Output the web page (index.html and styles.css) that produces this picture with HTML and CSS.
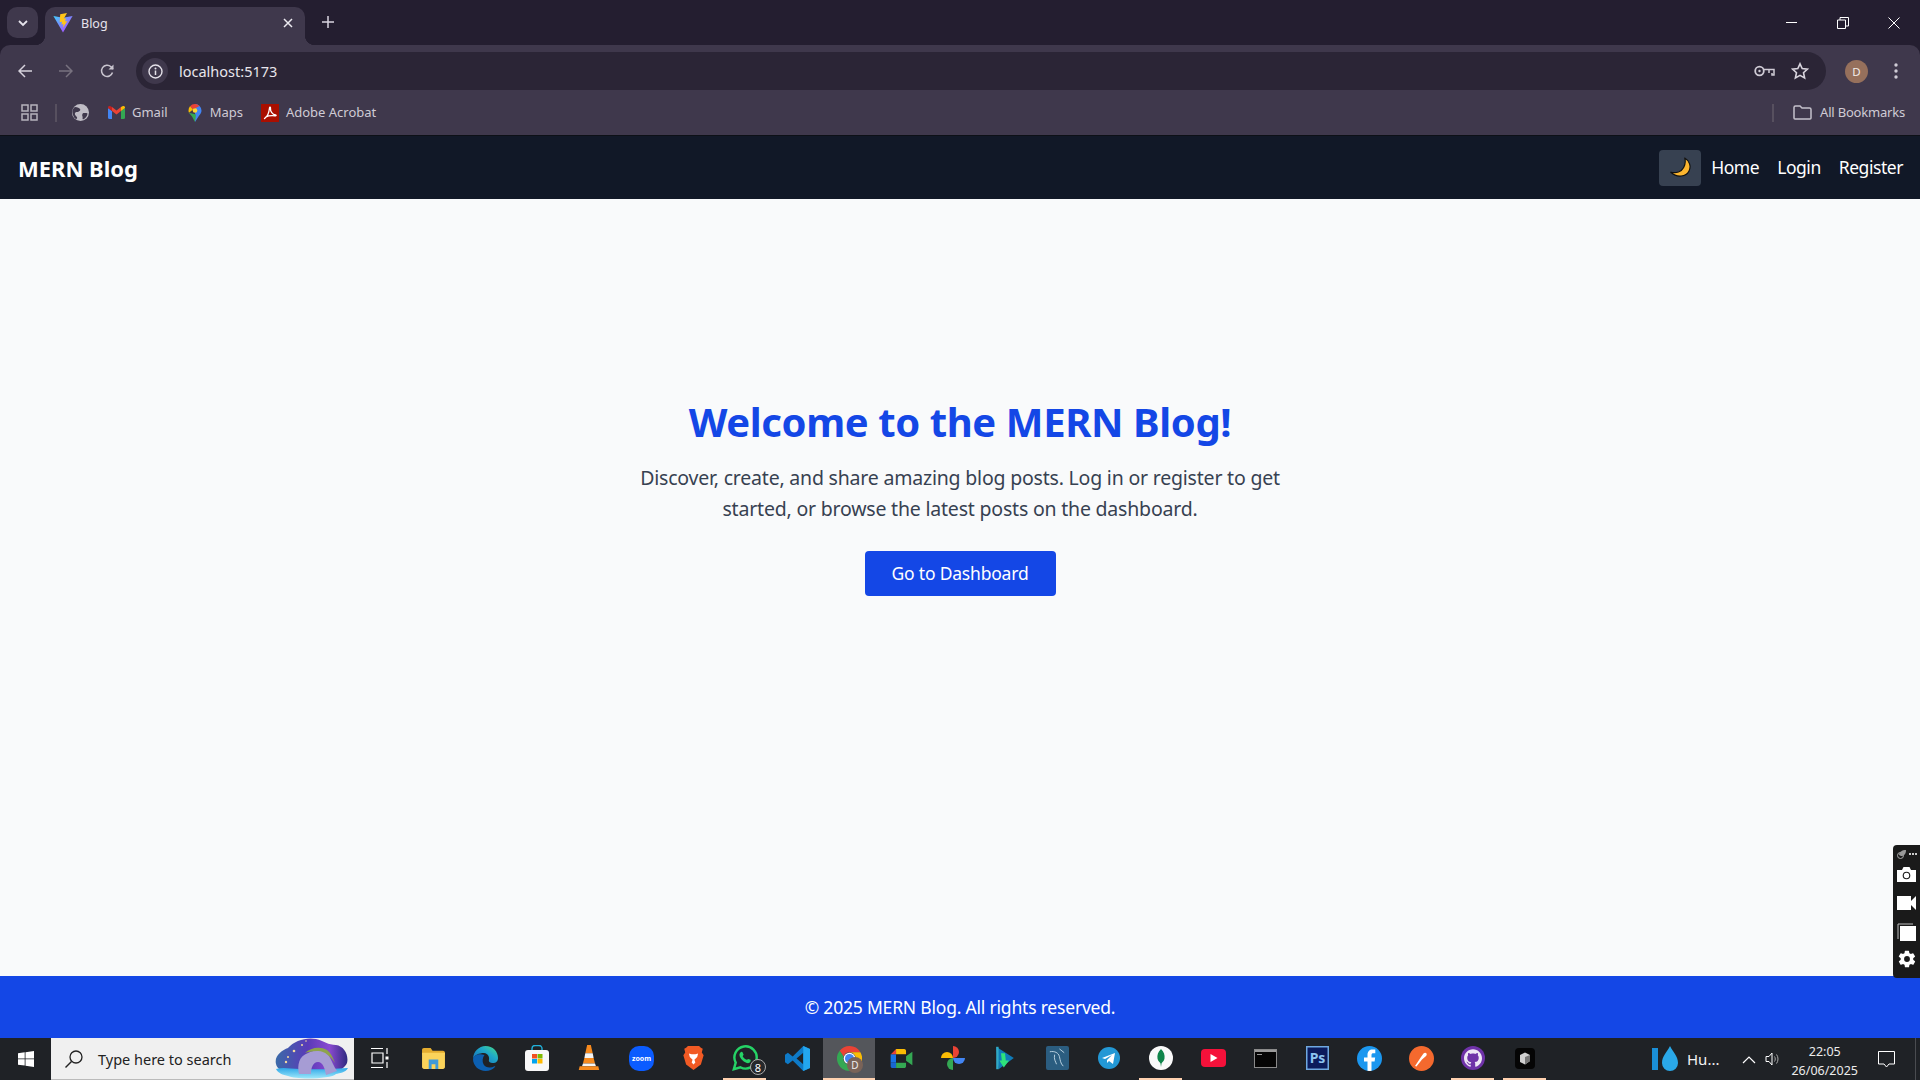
FILE: index.html
```html
<!DOCTYPE html>
<html lang="en">
<head>
<meta charset="utf-8">
<title>Blog</title>
<link rel="stylesheet" href="styles.css">
</head>
<body>
<div class="screen">
  <header class="browser">
    <div class="tabstrip">
      <div class="tabsearch"><svg width="12" height="12" viewBox="0 0 12 12"><path d="M2 4l4 4 4-4" fill="none" stroke="#e6e3ec" stroke-width="1.8"/></svg></div>
      <div class="tab">
        <svg class="tabicon" width="20" height="20" viewBox="0 0 20 20"><defs><linearGradient id="vg" x1="0" y1="0" x2="1" y2="1"><stop offset="0" stop-color="#41d1ff"/><stop offset="1" stop-color="#bd34fe"/></linearGradient></defs><path d="M0.4 3L10 19.5 19.6 3 10 4.8z" fill="url(#vg)"/><path d="M14 0L7.2 1.300l-.5 8 2.300-.5-.5 2.700 2-.5-.6 3.800 4.500-6.800-2.300.5.800-3.200-2.100.4z" fill="#ffc517"/></svg>
        <span class="tabtitle">Blog</span>
        <svg class="tabclose" width="10" height="10" viewBox="0 0 10 10"><path d="M1 1l8 8M9 1l-8 8" stroke="#eceaf0" stroke-width="1.5"/></svg>
      </div>
      <svg class="newtab" width="14" height="14" viewBox="0 0 14 14"><path d="M7 1v12M1 7h12" stroke="#d9d5e0" stroke-width="1.5"/></svg>
      <div class="winctl">
        <svg width="12" height="12" viewBox="0 0 12 12"><path d="M0 5.500h11" stroke="#fff"/></svg>
        <svg width="12" height="12" viewBox="0 0 12 12"><path d="M.5 3h8v8.500h-8zM3 3V.5h8.500V9H8.500" fill="none" stroke="#fff"/></svg>
        <svg width="12" height="12" viewBox="0 0 12 12"><path d="M.5.5l11 11M11.500.5l-11 11" stroke="#fff"/></svg>
      </div>
    </div>
    <div class="toolbar">
      <svg class="tbicon" width="14" height="14" viewBox="0 0 14 14"><path d="M14 7H1.500M7 1L1 7l6 6" fill="none" stroke="#d6d2dc" stroke-width="1.500"/></svg>
      <svg class="tbicon" width="14" height="14" viewBox="0 0 14 14"><path d="M0 7h12.500M7 1l6 6-6 6" fill="none" stroke="#78727f" stroke-width="1.500"/></svg>
      <svg class="tbicon" width="14" height="14" viewBox="0 0 14 14"><path d="M12.500 8.500A5.600 5.600 0 1 1 11 2.800L13 5" fill="none" stroke="#c9c5cf" stroke-width="1.500"/><path d="M13.500 .5v5h-5z" fill="#c9c5cf"/></svg>
      <div class="omnibox">
        <div class="infobadge"><svg width="15" height="15" viewBox="0 0 15 15"><circle cx="7.500" cy="7.500" r="6.500" fill="none" stroke="#e4e1e9" stroke-width="1.400"/><path d="M7.500 6.500v4.500" stroke="#e4e1e9" stroke-width="1.500"/><circle cx="7.500" cy="4.500" r="1" fill="#e4e1e9"/></svg></div>
        <span class="url">localhost:5173</span>
        <svg class="keyicon" width="21" height="12" viewBox="0 0 21 12"><circle cx="5.500" cy="6" r="4.300" fill="none" stroke="#cfcbd5" stroke-width="1.800"/><circle cx="5.500" cy="6" r="1.200" fill="#cfcbd5"/><path d="M10 4.500h10v5.500h-2V8M15 5v3" fill="none" stroke="#cfcbd5" stroke-width="1.500"/></svg>
        <svg class="staricon" width="18" height="18" viewBox="0 0 18 18"><path d="M9 1.800l2.200 4.800 5.200.6-3.900 3.500 1.100 5.200L9 13.300l-4.600 2.600 1.100-5.200L1.600 7.200l5.200-.6z" fill="none" stroke="#d8d4dd" stroke-width="1.600"/></svg>
      </div>
      <div class="avatar">D</div>
      <svg class="kebab" width="4" height="16" viewBox="0 0 4 16"><circle cx="2" cy="2" r="1.700" fill="#d0ccd6"/><circle cx="2" cy="8" r="1.700" fill="#d0ccd6"/><circle cx="2" cy="14" r="1.700" fill="#d0ccd6"/></svg>
    </div>
    <div class="bookmarks">
      <svg width="17" height="17" viewBox="0 0 17 17"><path d="M1 1h6v6H1zM10 1h6v6h-6zM1 10h6v6H1zM10 10h6v6h-6z" fill="none" stroke="#b6b2bc" stroke-width="1.500"/></svg>
      <span class="sep"></span>
      <svg class="bm-globe" width="17" height="17" viewBox="0 0 17 17"><circle cx="8.500" cy="8.500" r="8.500" fill="#bfbcc5"/><path d="M3 3c3 0 4 1 5 2s-1 3-3 3-3 2-1 4 1 3 0 3-3-3-3.500-6S2 3.500 3 3zM12 9c2 0 3 0 3.500 .5 0 2-2 5-4.500 6-1 -1 0-2-.5-3s-.5-3.500 1.500-3.500z" fill="#3f384c"/></svg>
      <div class="bm gmail"><svg width="17" height="13" viewBox="0 0 17 13"><path d="M0 2v9.500A1.500 1.500 0 0 0 1.500 13H4V5z" fill="#4285f4"/><path d="M13 13h2.500a1.500 1.500 0 0 0 1.500-1.500V2l-4 3z" fill="#34a853"/><path d="M13 1v4l4-3V1.500C17 .2 15.500-.5 14.500.3z" fill="#fbbc04"/><path d="M4 5V1l4.500 3.400L13 1v4L8.500 8.400z" fill="#ea4335"/><path d="M0 1.500V2l4 3V1L2.500.3C1.500-.5 0 .2 0 1.500z" fill="#c5221f"/></svg><span>Gmail</span></div>
      <div class="bm maps"><svg width="14" height="18" viewBox="0 0 14 18"><path d="M7 0a6.500 6.500 0 0 1 6.500 6.500c0 2-1 3.500-2.500 5.200L7 18z" fill="#4285f4"/><path d="M7 0a6.500 6.500 0 0 0-5 2.300l3 3.200L11.500 2A6.500 6.500 0 0 0 7 0z" fill="#ea4335"/><path d="M2 2.300A6.500 6.500 0 0 0 .5 6.500c0 .8.2 1.500.5 2.200L5 5.500z" fill="#fbbc04"/><path d="M1 8.700c.7 1.300 2 2.400 3 3.800L7 18l1-7.500z" fill="#34a853"/><circle cx="7" cy="6.500" r="2.300" fill="#fdd835"/></svg><span>Maps</span></div>
      <div class="bm acrobat"><span class="pdf"><svg width="14" height="14" viewBox="0 0 14 14"><path d="M1.500 12.500C4 11 6 7 6.500 2c.2-1.500 1.200-1 1 .5-.3 3 2 6 5 6.500 1 .2.800 1-.5.800C9 9.500 5.500 9.500 3 11c-1 1-1.500 1.800-1.500 1.500z" fill="none" stroke="#fff" stroke-width="1.300"/></svg></span><span>Adobe Acrobat</span></div>
      <span class="bmspacer"></span>
      <span class="sep sep-right"></span>
      <div class="bm allbm"><svg width="19" height="15" viewBox="0 0 19 15"><path d="M1 13V2.500C1 1.500 1.500 1 2.500 1H7l2 2h7.500c1 0 1.500.5 1.500 1.500V13c0 .7-.5 1-1 1H2c-.5 0-1-.3-1-1z" fill="none" stroke="#c5c1cb" stroke-width="1.500"/></svg><span>All Bookmarks</span></div>
    </div>
  </header>

  <div class="app">
    <nav class="navbar">
      <a class="brand">MERN Blog</a>
      <div class="navlinks">
        <button class="themebtn"><svg width="21" height="21" viewBox="0 0 20 20"><path d="M14 1C18.500 3.500 20.500 9 18 13.500C15.500 18.500 7 20.500 .8 14.500C6 15.800 11 14 13 10C14.500 7 15 4 14 1z" fill="#fdb62f" stroke="#111" stroke-width="1.100" stroke-linejoin="round"/></svg></button>
        <a>Home</a>
        <a>Login</a>
        <a>Register</a>
      </div>
    </nav>
    <main class="hero">
      <h1>Welcome to the MERN Blog!</h1>
      <p>Discover, create, and share amazing blog posts. Log in or register to get started, or browse the latest posts on the dashboard.</p>
      <button class="cta">Go to Dashboard</button>
    </main>
    <footer class="footer">© 2025 MERN Blog. All rights reserved.</footer>
  </div>

  <div class="taskbar">
    <div class="start"><svg width="16" height="16" viewBox="0 0 16 16"><path d="M0 2.300L6.700 1.300v6.200H0zM7.500 1.200L16 0v7.500H7.500zM0 8.300h6.700v6.300L0 13.700zM7.500 8.300H16V16L7.500 14.800z" fill="#fff"/></svg></div>
    <div class="searchbox">
      <svg width="20" height="20" viewBox="0 0 20 20"><circle cx="12" cy="8" r="6" fill="none" stroke="#222" stroke-width="1.300"/><path d="M7.500 12.500L1.500 18.500" stroke="#222" stroke-width="1.500"/></svg>
      <span>Type here to search</span>
      <svg class="searchart" width="76" height="42" viewBox="0 0 76 42"><defs><linearGradient id="sky" x1="0" y1="0" x2="1" y2="0"><stop offset="0" stop-color="#3b6aa8"/><stop offset=".45" stop-color="#5a3ab8"/><stop offset=".75" stop-color="#8a4ad0"/><stop offset="1" stop-color="#2f2a80"/></linearGradient><linearGradient id="sea" x1="0" y1="0" x2="0" y2="1"><stop offset="0" stop-color="#2fa8e8"/><stop offset="1" stop-color="#9fe8fa"/></linearGradient></defs><path d="M2 26C0 18 8 12 14 10 20 3 32 -1 42 1c8 2 12 6 20 6 8 1 13 10 11 18-2 5-8 8-14 8H14C8 33 3 31 2 26z" fill="url(#sky)"/><path d="M2 31c8-2 14 0 24 0s22 1 48-1c-3 5-8 5-12 6-4 5-40 6-48 2-5-1-10-3-12-7z" fill="url(#sea)"/><path d="M25 36c-2-9 0-18 9-21 8-4 18-4 21 3 3 5 5 11 8 15l-11 4c-1-6-3-13-8-13s-7 6-7 12z" fill="#a69cd4"/><path d="M31 15c5-5 15-7 22-3 4 3 6 8 8 13-4-7-12-13-18-12-5 0-9 1-12 2z" fill="#8ea34c"/><g fill="#f2d9a0"><circle cx="28" cy="7" r="1"/><circle cx="20" cy="13" r="1.300"/><circle cx="14" cy="19" r="1"/><circle cx="32" cy="3" r=".8"/><circle cx="12" cy="24" r="1.200"/></g></svg>
    </div>
    <div class="tcell taskview"><svg width="20" height="20" viewBox="0 0 20 20"><path d="M0 .5h12M0 19.500h12M1 5h11v10H1zM16 0v6M16 14v6" fill="none" stroke="#fff" stroke-width="1.200"/><rect x="14.500" y="8.500" width="3" height="3" fill="#fff"/></svg></div>
    <div class="tcell"><svg width="23" height="21" viewBox="0 0 24 22"><path d="M0 2c0-1 .7-2 2-2h7l2 3h11c1 0 2 1 2 2v2H0z" fill="#e5ad2f"/><path d="M0 5h24v15c0 1-1 2-2 2H2c-1 0-2-1-2-2z" fill="#fbd35a"/><path d="M7 12h10v10h-3v-5h-4v5H7z" fill="#3f9ad8"/></svg></div>
    <div class="tcell"><svg width="25" height="25" viewBox="0 0 25 25"><defs><linearGradient id="eg" x1="0" y1="1" x2="1" y2="0"><stop offset="0" stop-color="#1565b8"/><stop offset=".6" stop-color="#1fa8c8"/><stop offset="1" stop-color="#4ade80"/></linearGradient></defs><path d="M12.500 0C20 0 25 5.500 25 12c0 4-3 5.500-6 5-3-.5-3.500-2-3-3.500.5-2-.5-6-5-6.500C6 7 1.500 9 0 13 .2 5.500 6 0 12.500 0z" fill="url(#eg)"/><path d="M0 13c0 7 6 12 12.500 12 4 0 7-1.500 9.500-4 .5-.5 0-1-.5-.7-4 2-9 1.500-11-2-1.500-2.800-1-7 1-9.300C6 7 1 9 0 13z" fill="#0c5fb0"/></svg></div>
    <div class="tcell"><svg width="24" height="26" viewBox="0 0 24 26"><path d="M7 7V3.500a3 3 0 0 1 3-3h4a3 3 0 0 1 3 3V7" fill="none" stroke="#21b0d8" stroke-width="1.400"/><rect x="0" y="5" width="24" height="21" rx="3" fill="#f8f8f8"/><rect x="7" y="9" width="5" height="4.500" fill="#f25022"/><rect x="12.500" y="9" width="5" height="4.500" fill="#7fba00"/><rect x="7" y="14" width="5" height="4.500" fill="#00a4ef"/><rect x="12.500" y="14" width="5" height="4.500" fill="#ffb900"/></svg></div>
    <div class="tcell"><svg width="22" height="26" viewBox="0 0 22 28"><path d="M9 0h4l2 9H7z" fill="#f68a1e"/><path d="M7 9h8l1 5H6z" fill="#f4f4f4"/><path d="M6 14h10l1.500 6h-13z" fill="#f68a1e"/><path d="M4.500 20h13l1 3h-15z" fill="#f4f4f4"/><path d="M1 23h20l1 4H0z" fill="#f68a1e"/></svg></div>
    <div class="tcell"><svg width="25" height="25" viewBox="0 0 25 25"><rect width="25" height="25" rx="10" fill="#0b5cff"/><text x="12.500" y="15" class="zoomtext">zoom</text></svg></div>
    <div class="tcell"><svg width="21" height="24" viewBox="0 0 22 26"><path d="M5 0h12l2 2 2 1-1 4 2 3-3 10-8 6-8-6L0 10l2-3-1-4 2-1z" fill="#f15a24"/><path d="M6 8l3 1h4l3-1-1 4-3 3 1 3-2 2-2-2 1-3-3-3z" fill="#fff"/></svg></div>
    <div class="tcell running"><svg width="26" height="26" viewBox="0 0 28 28"><path d="M2 26l2-7A12 12 0 1 1 9 24z" fill="none" stroke="#25d366" stroke-width="2.600"/><path d="M9 8c1-1 2-1 2.500 0l1 2.500-1 1.500c1 2 2.500 3 4.500 4l1.500-1 2.500 1c.5 1 0 3-2 3.500-4 .5-10-5-10-9 0-1 .5-2 1-2.500z" fill="#25d366"/></svg><span class="badge8">8</span></div>
    <div class="tcell"><svg width="25" height="25" viewBox="0 0 26 26"><path d="M19 0l7 3v20l-7 3L8 15l-5 4-3-2v-8l3-2 5 4z" fill="#0e7ac7"/><path d="M19 7l-7 6 7 6z" fill="#1f2226"/><path d="M19 0l7 3v20l-7 3z" fill="#23a6ee"/></svg></div>
    <div class="tcell active running"><svg width="25" height="25" viewBox="0 0 26 26"><path d="M13 0a13 13 0 0 1 11.300 6.500H13a6.500 6.500 0 0 0-6.200 4.500L2.800 5A13 13 0 0 1 13 0z" fill="#ea4335"/><path d="M24.300 6.500A13 13 0 0 1 13 26l5.600-9.700A6.500 6.500 0 0 0 18.600 9.500 6.500 6.500 0 0 0 13 6.500z" fill="#fbbc04"/><path d="M2.800 5A13 13 0 0 0 13 26l5.600-9.700A6.500 6.500 0 0 1 6.800 11z" fill="#34a853"/><circle cx="13" cy="13" r="6" fill="#fff"/><circle cx="13" cy="13" r="4.700" fill="#4285f4"/></svg><span class="badged">D</span></div>
    <div class="tcell"><svg width="23" height="19" viewBox="0 0 24 21"><path d="M0 6L6 0v6z" fill="#ea4335"/><path d="M0 6h6v9H0z" fill="#1a73e8"/><path d="M6 0h9c1 0 2 1 2 2v4H6z" fill="#fbbc04"/><path d="M0 15h6v6H2c-1 0-2-1-2-2z" fill="#1967d2"/><path d="M6 15h11v4c0 1-1 2-2 2H6z" fill="#34a853"/><path d="M17 8l7-5v15l-7-5z" fill="#34a853"/><rect x="6" y="6" width="11" height="9" fill="#1f2226"/></svg></div>
    <div class="tcell"><svg width="24" height="24" viewBox="0 0 24 24"><path d="M12 12H0a6 6 0 0 1 12 0z" fill="#fbbc04"/><path d="M12 12V0a6 6 0 0 1 0 12z" fill="#ea4335"/><path d="M12 12h12a6 6 0 0 1-12 0z" fill="#4285f4"/><path d="M12 12v12a6 6 0 0 1 0-12z" fill="#34a853"/></svg></div>
    <div class="tcell"><svg width="20" height="24" viewBox="0 0 22 30"><path d="M0 1l22 14L3 29z" fill="#0f7bb8"/><path d="M6 9h5l1 9h4l-6.500 9L4 18h3z" fill="#2fe37a"/><rect x="0" y="1" width="3" height="28" fill="#31a9c6"/></svg></div>
    <div class="tcell"><svg width="23" height="24" viewBox="0 0 24 25"><rect width="24" height="25" rx="2" fill="#2b5d80"/><path d="M4 6c5-1 9 1 10 5s1 7 4 10M9 9c-1 5 1 7 2 10M14 3l5 4" fill="none" stroke="#bcd3e2" stroke-width="1"/></svg></div>
    <div class="tcell"><svg width="22" height="22" viewBox="0 0 22 22"><circle cx="11" cy="11" r="11" fill="#2398d5"/><path d="M4 11l13-5-2 11-4-3-2 2v-3l5-5-7 4z" fill="#fff"/></svg></div>
    <div class="tcell running"><svg width="24" height="24" viewBox="0 0 24 24"><circle cx="12" cy="12" r="12" fill="#fafafa"/><path d="M12 3c3 3 4 6 3.500 9.500-.3 2.500-2.500 3.500-3 5L12 21l-.5-3.500c-.5-1.500-2.700-2.500-3-5C8 9 9 6 12 3z" fill="#10854b"/></svg></div>
    <div class="tcell"><svg width="25" height="18" viewBox="0 0 25 18"><rect width="25" height="18" rx="4" fill="#f5113a"/><path d="M9.500 5l7 4-7 4z" fill="#fff"/></svg></div>
    <div class="tcell"><svg width="23" height="19" viewBox="0 0 23 19"><rect x=".5" y=".5" width="22" height="18" fill="#050505" stroke="#8a8a8a"/><rect x="1" y="1" width="21" height="2" fill="#9a9a9a"/><path d="M3 5.500h5" stroke="#999"/></svg></div>
    <div class="tcell"><svg width="23" height="24" viewBox="0 0 23 24"><rect x=".75" y=".75" width="21.500" height="22.500" fill="#0b1b5c" stroke="#6fa8e0" stroke-width="1.500"/><text x="11.500" y="17" class="pstext">Ps</text></svg></div>
    <div class="tcell"><svg width="25" height="25" viewBox="0 0 25 25"><defs><clipPath id="fbc"><circle cx="12.500" cy="12.500" r="12.500"/></clipPath></defs><circle cx="12.500" cy="12.500" r="12.500" fill="#1b97ef"/><path clip-path="url(#fbc)" d="M10.500 25V15.500H7v-4h3.500V9c0-3.500 2-5.500 5-5.500h2.800v3.700h-2c-1.200 0-1.800.6-1.800 2v2.300h3.700l-.6 4h-3.100V25z" fill="#fff"/></svg></div>
    <div class="tcell"><svg width="25" height="25" viewBox="0 0 25 25"><circle cx="12.500" cy="12.500" r="12.500" fill="#f4692e"/><path d="M6 20l6-9 2.500-3.500c1-1 2.500-1 3 0s.2 2-1 3L13 13.500 7.500 20.500z" fill="#fff"/></svg></div>
    <div class="tcell running"><svg width="24" height="24" viewBox="0 0 24 24"><circle cx="12" cy="12" r="12" fill="#6f32a8"/><g transform="translate(3 3) scale(.75)"><path fill="#eee6f5" d="M12 .297c-6.630 0-12 5.373-12 12 0 5.303 3.438 9.800 8.205 11.385.6.113.82-.258.82-.577 0-.285-.01-1.040-.015-2.040-3.338.724-4.042-1.610-4.042-1.610C4.422 18.070 3.633 17.700 3.633 17.700c-1.087-.744.084-.729.084-.729 1.205.084 1.838 1.236 1.838 1.236 1.070 1.835 2.809 1.305 3.495.998.108-.776.417-1.305.760-1.605-2.665-.3-5.466-1.332-5.466-5.930 0-1.310.465-2.380 1.235-3.220-.135-.303-.54-1.523.105-3.176 0 0 1.005-.322 3.300 1.230.960-.267 1.980-.399 3-.405 1.020.006 2.040.138 3 .405 2.280-1.552 3.285-1.230 3.285-1.230.645 1.653.24 2.873.12 3.176.765.840 1.230 1.910 1.230 3.220 0 4.610-2.805 5.625-5.475 5.920.42.360.81 1.096.81 2.220 0 1.606-.015 2.896-.015 3.286 0 .315.21.690.825.570C20.565 22.092 24 17.592 24 12.297c0-6.627-5.373-12-12-12"/></g></svg></div>
    <div class="tcell running"><svg width="20" height="21" viewBox="0 0 20 21"><rect width="20" height="21" rx="4" fill="#050505"/><path d="M5 7l5-2.500L15 7v6l-5 3.500L5 14z" fill="#d0d0d0"/><path d="M10 9v7.500l5-3.500V7z" fill="#777"/></svg></div>
    <div class="tray">
      <div class="weather"><svg width="27" height="26" viewBox="0 0 27 26"><rect y="2" width="6" height="22" fill="#1a8fd8"/><path d="M18 0c3 6 8 10 8 17a8 8 0 0 1-16 0C10 10 15 6 18 0z" fill="#2aa8e8"/></svg><span>Hu...</span></div>
      <svg class="chev" width="14" height="9" viewBox="0 0 14 9"><path d="M1 8l6-6 6 6" fill="none" stroke="#fff" stroke-width="1.200"/></svg>
      <svg class="vol" width="16" height="16" viewBox="0 0 16 16"><path d="M1 5.500h3L7 2v12l-3-3.500H1z" fill="none" stroke="#fff"/><path d="M9.500 5.500c1 1.500 1 3.500 0 5M11.500 3.500c2 2.500 2 6.500 0 9" fill="none" stroke="#aaa"/></svg>
      <div class="clock"><span>22:05</span><span>26/06/2025</span></div>
      <svg class="notif" width="17" height="17" viewBox="0 0 17 17"><path d="M.5 .5h16v12.500H11l-2.500 3-2.500-3H.5z" fill="none" stroke="#fff"/></svg>
      <span class="deskline"></span>
    </div>
  </div>

  <aside class="sidewidget">
    <div class="swtop"><svg width="9" height="9" viewBox="0 0 9 9"><circle cx="3.500" cy="5.500" r="3" fill="none" stroke="#aaa"/><path d="M2 5c0-3 3-5 7-5 0 4-2 6-5 6z" fill="#9a9a9a"/></svg><span class="dots"><i></i><i></i><i></i></span></div>
    <svg class="sw-cam" width="19" height="15" viewBox="0 0 19 15"><path d="M0 3h5l1.500-3h6L14 3h5v12H0z" fill="#fff"/><circle cx="9.500" cy="8.500" r="3.800" fill="#1a1a1a"/><circle cx="9.500" cy="8.500" r="2.700" fill="#fff"/></svg>
    <svg class="sw-vid" width="19" height="14" viewBox="0 0 19 14"><rect width="14" height="14" fill="#fff"/><path d="M14 5l5-5v14l-5-5z" fill="#fff"/></svg>
    <svg class="sw-win" width="19" height="18" viewBox="0 0 19 18"><path d="M1 16V1h15" fill="none" stroke="#bdbdbd"/><rect x="3" y="3" width="16" height="15" fill="#fff"/></svg>
    <svg class="sw-gear" width="20" height="20" viewBox="0 0 24 24"><path fill="#fff" d="M19.400 13c.04-.33.1-.66.1-1s-.06-.67-.1-1l2.100-1.650a.5.5 0 0 0 .12-.64l-2-3.460a.5.5 0 0 0-.6-.22l-2.500 1a7.300 7.300 0 0 0-1.700-1L14.400 2.400a.5.5 0 0 0-.5-.4h-4a.5.5 0 0 0-.5.4L9 5.050a7.700 7.700 0 0 0-1.700 1l-2.500-1a.5.5 0 0 0-.6.22l-2 3.460a.5.5 0 0 0 .12.64L4.500 11c-.04.33-.1.67-.1 1s.06.67.1 1l-2.100 1.650a.5.5 0 0 0-.12.64l2 3.460c.12.22.38.3.6.22l2.500-1c.52.4 1.080.73 1.700 1l.4 2.630c.04.24.25.4.5.4h4c.25 0 .46-.16.5-.4l.4-2.630a7.700 7.700 0 0 0 1.700-1l2.500 1c.22.08.48 0 .6-.22l2-3.460a.5.5 0 0 0-.12-.64zM12 15.500a3.500 3.500 0 1 1 0-7 3.500 3.500 0 0 1 0 7z"/></svg>
  </aside>
</div>
</body>
</html>
```

FILE: styles.css
```css
* { box-sizing: border-box; }
html, body { margin: 0; height: 100%; overflow: hidden; }
body { font-family: "Noto Sans", "Open Sans", sans-serif; }
.screen { position: relative; width: 1920px; height: 1080px; display: flex; flex-direction: column; }

/* browser chrome */
.browser { background: #241e30; color: #e6e3ec; flex: none; }
.tabstrip { height: 45px; display: flex; align-items: flex-end; padding-left: 7px; }
.tabsearch { width: 31px; height: 31px; margin-bottom: 7px; background: #3f384c; border-radius: 10px; display: flex; align-items: center; justify-content: center; }
.tab { position: relative; width: 260px; height: 38px; margin-left: 7px; background: #3f384c; border-radius: 10px 10px 0 0; display: flex; align-items: center; padding: 0 10px 0 8px; }
.tab::before, .tab::after { content: ""; position: absolute; bottom: 0; width: 10px; height: 10px; }
.tab::before { left: -10px; background: radial-gradient(circle at 0 0, transparent 10px, #3f384c 10.5px); }
.tab::after { right: -10px; background: radial-gradient(circle at 100% 0, transparent 10px, #3f384c 10.5px); }
.tabicon { margin-top: -6px; }
.tabtitle { flex: 1; margin-left: 8px; margin-top: -6px; font-size: 12.5px; }
.tabclose { margin: -7px 2px 0 0; }
.newtab { margin: 0 0 16px 16px; }
.winctl { margin-left: auto; display: flex; align-items: center; gap: 39px; padding-right: 20px; height: 45px; }
.toolbar { height: 45px; background: #3f384c; display: flex; align-items: center; padding: 7px 0 0 18px; border-radius: 10px 10px 0 0; }
.tbicon { margin-right: 27px; flex: none; }
.toolbar .tbicon:nth-child(3) { margin-right: 22px; }
.omnibox { width: 1690px; height: 38px; background: #2b2536; border-radius: 19px; display: flex; align-items: center; padding-left: 6px; }
.infobadge { width: 26px; height: 26px; border-radius: 50%; background: #3f384c; display: flex; align-items: center; justify-content: center; }
.url { margin-left: 11px; font-size: 14.5px; color: #e8e5ec; }
.keyicon { margin-left: auto; }
.staricon { margin: 0 17px 0 16px; }
.avatar { width: 23px; height: 23px; margin-left: 19px; border-radius: 50%; background: #96705c; color: #f2ece8; font-size: 11.5px; display: flex; align-items: center; justify-content: center; }
.kebab { margin-left: 26px; }
.bookmarks { height: 45px; background: #3f384c; display: flex; align-items: center; padding: 0 15px 0 21px; font-size: 13px; color: #cfcbd5; }
.sep { width: 2px; height: 18px; background: #57505f; margin: 0 15px 0 17px; }
.sep-right { margin-right: 19px; }
.bm { display: flex; align-items: center; gap: 7px; }
.bm > span:last-child { margin-top: -2px; }
.gmail { margin-left: 19px; }
.maps { margin-left: 20px; gap: 8px; }
.acrobat { margin-left: 18px; gap: 7px; }
.pdf { width: 18px; height: 18px; background: #a90f00; display: flex; align-items: center; justify-content: center; }
.bmspacer { flex: 1; }
.allbm { gap: 8px; letter-spacing: -0.2px; }

/* app */
.app { flex: 1; display: flex; flex-direction: column; min-height: 0; }
.navbar { height: 64px; flex: none; background: #111827; color: #fff; display: flex; align-items: center; justify-content: space-between; padding: 0 17px 2px 18px; border-top: 1px solid #0d1017; }
.brand { margin-top: 2px; font-size: 22px; font-weight: 700; }
.navlinks { display: flex; align-items: center; gap: 18px; font-size: 17.5px; letter-spacing: -0.45px; }
.themebtn { width: 42px; height: 36px; margin: 2px -8px 0 0; padding: 0; border: 0; border-radius: 4px; background: #374151; display: flex; align-items: center; justify-content: center; }
.hero { flex: 1; background: #f9fafb; display: flex; flex-direction: column; align-items: center; padding-top: 199px; text-align: center; }
.hero h1 { margin: 0 0 16px; font-size: 40px; line-height: 48px; font-weight: 700; letter-spacing: -0.4px; color: #1447e6; }
.hero p { margin: 0 0 27px; width: 672px; font-size: 19.5px; line-height: 31px; letter-spacing: -0.2px; color: #374151; }
.cta { width: 191px; height: 45px; padding: 0 0 2px; border: 0; border-radius: 4px; background: #1447e6; color: #fff; font: inherit; font-size: 17.5px; letter-spacing: -0.2px; }
.footer { height: 62px; flex: none; background: #1447e6; color: #fff; display: flex; align-items: center; justify-content: center; font-size: 17.5px; letter-spacing: -0.2px; }

/* taskbar */
.taskbar { height: 42px; flex: none; background: #1f2226; color: #fff; display: flex; align-items: stretch; }
.start { width: 51px; display: flex; align-items: center; justify-content: center; }
.searchbox { position: relative; width: 303px; background: #f0f0f0; border-bottom: 1px solid #bbb; display: flex; align-items: center; padding-left: 13px; color: #222; font-size: 14.5px; }
.searchbox span { margin-left: 14px; }
.searchart { position: absolute; right: 4px; top: 0; }
.tcell { width: 52px; position: relative; display: flex; align-items: center; justify-content: center; padding-bottom: 2px; }
.taskview { margin-left: 1px; }
.running::after { content: ""; position: absolute; left: 4px; right: 5px; bottom: 0; height: 2px; background: #ffd2b0; }
.active { background: #54565b; }
.active::after { left: 0; right: 0; }
.badge8 { position: absolute; right: 5px; bottom: 5px; width: 16px; height: 16px; border-radius: 50%; background: #26282b; border: 1px solid #aaa; color: #fff; font-size: 11px; display: flex; align-items: center; justify-content: center; }
.badged { position: absolute; right: 12px; bottom: 7px; width: 16px; height: 16px; border-radius: 50%; background: #7a6358; color: #eee; font-size: 10px; display: flex; align-items: center; justify-content: center; }
.zoomtext { font: 700 7px "Noto Sans", sans-serif; fill: #fff; text-anchor: middle; }
.pstext { font: 700 14px "Noto Sans", sans-serif; fill: #8cc4ef; text-anchor: middle; }
.tray { flex: 1; display: flex; align-items: center; padding-left: 101px; font-size: 14px; }
.weather { display: flex; align-items: center; gap: 8px; font-size: 15px; color: #f2f2f2; }
.chev { margin-left: 23px; }
.vol { margin-left: 9px; }
.clock { margin: 3px 0 0 10px; display: flex; flex-direction: column; align-items: center; font-size: 12.5px; line-height: 19px; color: #ececec; }
.notif { margin-left: 20px; }
.deskline { margin-left: auto; width: 1px; height: 100%; background: #4a4c50; margin-right: 4px; }

/* capture widget */
.sidewidget { position: absolute; right: 0; top: 845px; width: 27px; height: 133px; background: #1a1a1a; border-radius: 4px 0 0 4px; display: flex; flex-direction: column; align-items: center; padding-top: 4px; }
.swtop { display: flex; align-items: center; gap: 3px; height: 10px; }
.dots { display: flex; gap: 1px; }
.dots i { width: 2px; height: 2px; background: #ccc; }
.sw-cam { margin-top: 8px; }
.sw-vid { margin-top: 14px; }
.sw-win { margin-top: 13px; }
.sw-gear { margin-top: 8px; }
```
